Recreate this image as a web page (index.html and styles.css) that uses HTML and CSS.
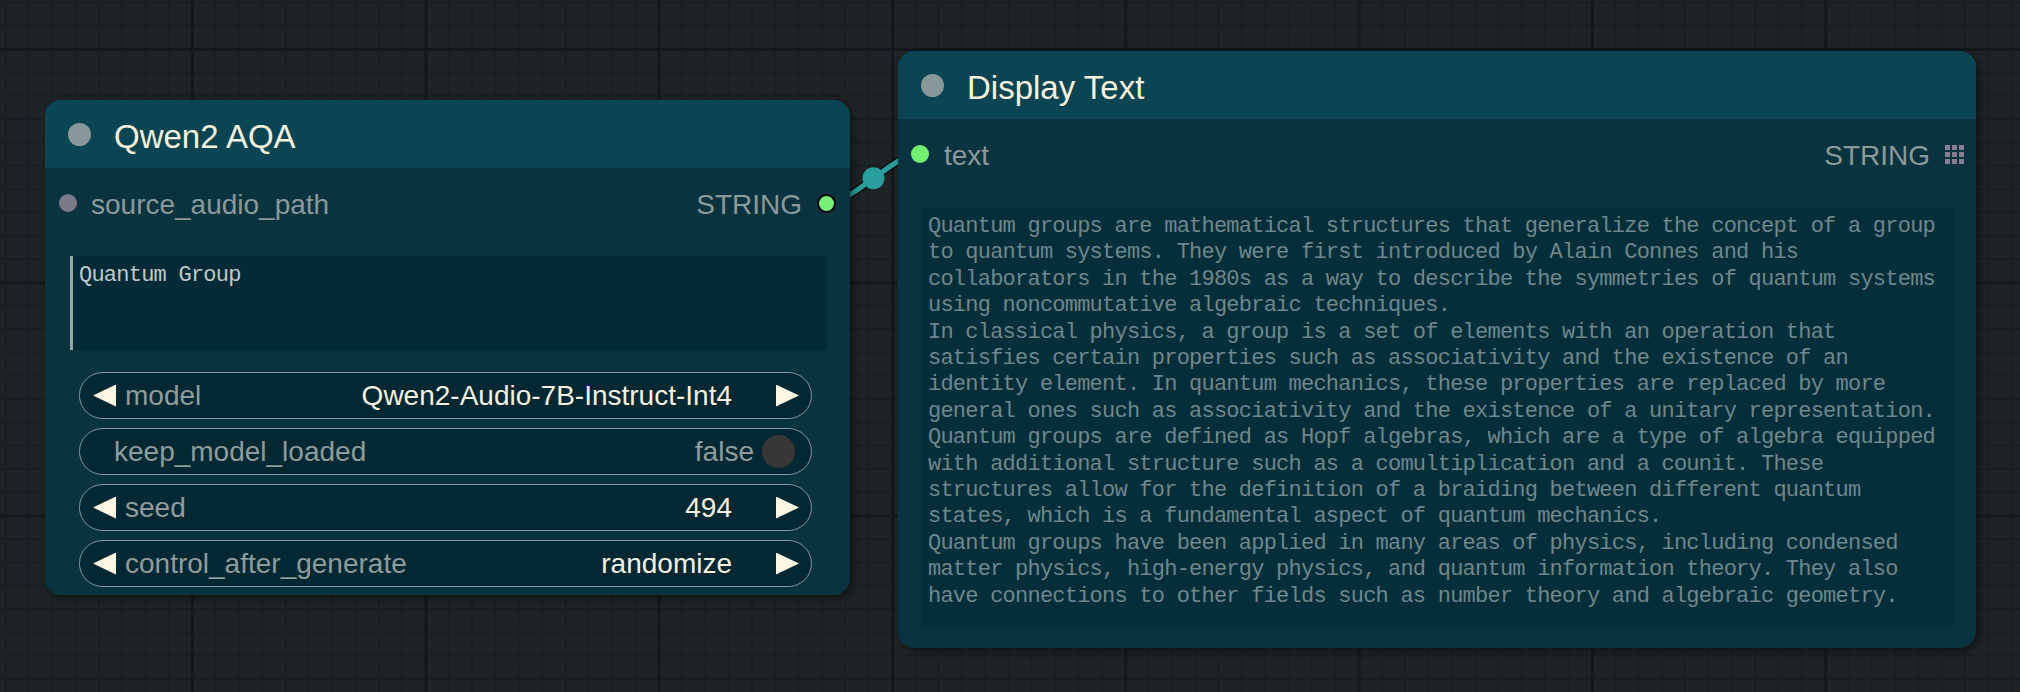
FILE: index.html
```html
<!DOCTYPE html>
<html>
<head>
<meta charset="utf-8">
<link rel="stylesheet" href="styles.css">
</head>
<body>
<div class="canvas">
  <svg class="links" width="2020" height="692" viewBox="0 0 2020 692">
    <path class="link-shadow" d="M827 203 C853 203 894 153.5 920 153.5"/>
    <path class="link" d="M827 203 C853 203 894 153.5 920 153.5"/>
    <circle class="link-mid" cx="873.5" cy="178.2" r="11"/>
  </svg>

  <div class="node node-qwen">
    <div class="node-title">
      <span class="title-dot"></span>
      <span class="title-text">Qwen2 AQA</span>
    </div>
    <div class="node-body">
      <div class="slot-row">
        <span class="slot-dot slot-in-gray"></span>
        <span class="slot-label">source_audio_path</span>
        <span class="slot-spacer"></span>
        <span class="slot-label">STRING</span>
        <span class="slot-dot slot-out-green"></span>
      </div>
      <div class="prompt-box">Quantum Group</div>
      <div class="widgets">
        <div class="widget">
          <span class="arrow arrow-left"></span>
          <span class="w-label">model</span>
          <span class="w-value">Qwen2-Audio-7B-Instruct-Int4</span>
          <span class="arrow arrow-right"></span>
        </div>
        <div class="widget widget-toggle">
          <span class="w-label">keep_model_loaded</span>
          <span class="w-value w-value-dim">false</span>
          <span class="toggle-knob"></span>
        </div>
        <div class="widget">
          <span class="arrow arrow-left"></span>
          <span class="w-label">seed</span>
          <span class="w-value">494</span>
          <span class="arrow arrow-right"></span>
        </div>
        <div class="widget">
          <span class="arrow arrow-left"></span>
          <span class="w-label">control_after_generate</span>
          <span class="w-value">randomize</span>
          <span class="arrow arrow-right"></span>
        </div>
      </div>
    </div>
  </div>

  <div class="node node-display">
    <div class="node-title">
      <span class="title-dot"></span>
      <span class="title-text">Display Text</span>
    </div>
    <div class="node-body">
      <div class="slot-row slot-row-display">
        <span class="slot-dot slot-in-green"></span>
        <span class="slot-label">text</span>
        <span class="slot-spacer"></span>
        <span class="slot-label">STRING</span>
        <span class="grid-icon">
          <i></i><i></i><i></i><i></i><i></i><i></i><i></i><i></i><i></i>
        </span>
      </div>
      <div class="display-box">Quantum groups are mathematical structures that generalize the concept of a group
to quantum systems. They were first introduced by Alain Connes and his
collaborators in the 1980s as a way to describe the symmetries of quantum systems
using noncommutative algebraic techniques.
In classical physics, a group is a set of elements with an operation that
satisfies certain properties such as associativity and the existence of an
identity element. In quantum mechanics, these properties are replaced by more
general ones such as associativity and the existence of a unitary representation.
Quantum groups are defined as Hopf algebras, which are a type of algebra equipped
with additional structure such as a comultiplication and a counit. These
structures allow for the definition of a braiding between different quantum
states, which is a fundamental aspect of quantum mechanics.
Quantum groups have been applied in many areas of physics, including condensed
matter physics, high-energy physics, and quantum information theory. They also
have connections to other fields such as number theory and algebraic geometry.</div>
    </div>
  </div>
</div>
</body>
</html>
```

FILE: styles.css
```css
html, body {
  margin: 0;
  padding: 0;
}

body {
  width: 2020px;
  height: 692px;
  overflow: hidden;
  font-family: "Liberation Sans", Arial, sans-serif;
  background-color: #1e2325;
}

.canvas {
  position: relative;
  width: 2020px;
  height: 692px;
  background-color: #1e2325;
  background-image:
    linear-gradient(to right, #13181a 0, #13181a 3px, transparent 3px),
    linear-gradient(to bottom, #13181a 0, #13181a 3px, transparent 3px),
    linear-gradient(to right, #191e20 0, #191e20 2px, transparent 2px),
    linear-gradient(to bottom, #191e20 0, #191e20 2px, transparent 2px);
  background-size:
    233.33px 100%,
    100% 233.33px,
    23.333px 100%,
    100% 23.333px;
  background-position:
    191px 0,
    0 48px,
    4.5px 0,
    0 1.5px;
}

.links {
  position: absolute;
  left: 0;
  top: 0;
  z-index: 0;
}

.link-shadow {
  fill: none;
  stroke: rgba(0, 0, 0, 0.55);
  stroke-width: 8;
}

.link {
  fill: none;
  stroke: #2a9e9c;
  stroke-width: 5;
}

.link-mid {
  fill: #2a9e9c;
}

.node {
  position: absolute;
  z-index: 1;
  display: flex;
  flex-direction: column;
  background: #08333f;
  border-radius: 16px;
  overflow: hidden;
  box-shadow: 3px 3px 7px rgba(0, 0, 0, 0.45);
}

.node-qwen {
  left: 45px;
  top: 100px;
  width: 805px;
  height: 495px;
}

.node-display {
  left: 898px;
  top: 51px;
  width: 1078px;
  height: 597px;
}

.node-title {
  height: 68px;
  flex: 0 0 auto;
  display: flex;
  align-items: center;
  gap: 23px;
  padding-left: 23px;
  background: #0b4553;
  border-bottom: 2px solid #07313d;
}

.title-dot {
  width: 23px;
  height: 23px;
  border-radius: 50%;
  background: #88979a;
  flex: 0 0 auto;
}

.title-text {
  font-size: 33px;
  color: #f6f0dc;
  line-height: 1;
  margin-top: 5px;
}

.node-body {
  flex: 1;
  display: flex;
  flex-direction: column;
  min-height: 0;
}

.slot-row {
  height: 64px;
  box-sizing: border-box;
  flex: 0 0 auto;
  display: flex;
  align-items: center;
  padding: 2px 14px 0 14px;
}

.slot-row-display {
  padding: 2px 12px 0 13px;
}

.slot-dot {
  width: 18px;
  height: 18px;
  border-radius: 50%;
  flex: 0 0 auto;
  box-sizing: border-box;
}

.slot-in-gray {
  background: #7b7a8b;
  margin-right: 14px;
}

.slot-in-green {
  background: #72f072;
  margin-right: 15px;
}

.slot-out-green {
  background: #78f078;
  border: 2px solid #050505;
  width: 19px;
  height: 19px;
  margin-left: 15px;
}

.slot-label {
  font-size: 28px;
  color: #8b999b;
  line-height: 1;
  margin-top: 4px;
}

.slot-spacer {
  flex: 1;
}

.grid-icon {
  display: grid;
  grid-template-columns: repeat(3, 5px);
  grid-template-rows: repeat(3, 5px);
  gap: 2px;
  margin-left: 15px;
}

.grid-icon i {
  display: block;
  background: #857d91;
}

.prompt-box {
  margin: 22px 23px 0 25px;
  height: 94px;
  flex: 0 0 auto;
  box-sizing: border-box;
  border-left: 3px solid #9aa4a6;
  background: #022a37;
  padding: 7px 6px;
  font-family: "Liberation Mono", "Courier New", monospace;
  font-size: 22px;
  letter-spacing: -0.77px;
  line-height: 26.4px;
  color: #c3c8c8;
}

.widgets {
  margin: 22px 38px 0 34px;
  display: flex;
  flex-direction: column;
  gap: 9px;
}

.widget {
  height: 47px;
  box-sizing: border-box;
  border: 1.6px solid #86979a;
  border-radius: 24px;
  background: #022834;
  display: flex;
  align-items: center;
  padding: 0 12px 0 13px;
  font-size: 28px;
  line-height: 1;
}

.widget-toggle {
  padding: 0 16px 0 34px;
}

.arrow {
  width: 23px;
  height: 22px;
  flex: 0 0 auto;
  background: #fdf6e3;
}

.arrow-left {
  clip-path: polygon(0 50%, 100% 0, 100% 100%);
  margin-right: 9px;
}

.arrow-right {
  clip-path: polygon(0 0, 100% 50%, 0 100%);
  margin-left: 44px;
}

.w-label {
  color: #8f9c9c;
  flex: 1;
  white-space: nowrap;
}

.w-value {
  color: #f6f0e0;
  white-space: nowrap;
}

.w-value-dim {
  color: #8f9c9c;
}

.toggle-knob {
  width: 33px;
  height: 33px;
  border-radius: 50%;
  background: #373737;
  margin-left: 8px;
  flex: 0 0 auto;
}

.display-box {
  margin: 22px 22px 20px 24px;
  flex: 1;
  min-height: 0;
  background: #052e3b;
  padding: 7px 6px;
  white-space: pre;
  overflow: hidden;
  font-family: "Liberation Mono", "Courier New", monospace;
  font-size: 22px;
  letter-spacing: -0.77px;
  line-height: 26.4px;
  color: #6f878b;
}
```
